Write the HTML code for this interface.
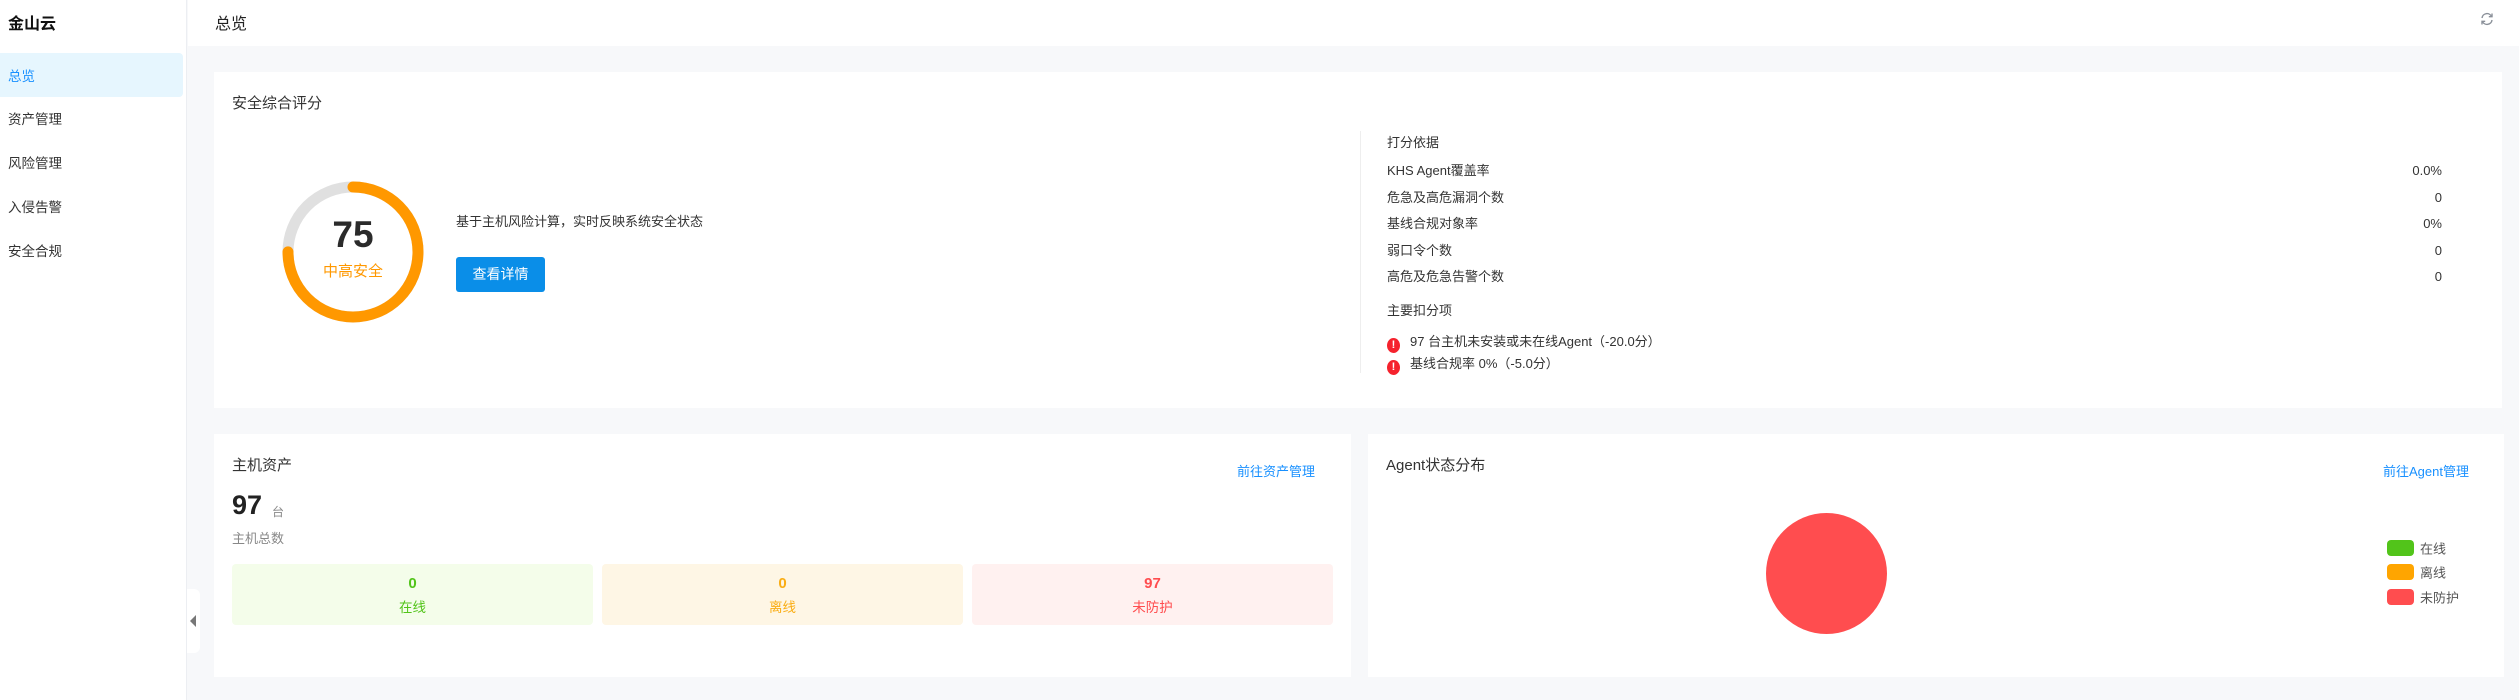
<!DOCTYPE html>
<html><head><meta charset="utf-8"><style>
*{margin:0;padding:0;box-sizing:border-box}
body{width:2519px;height:700px;overflow:hidden;background:#f7f8fa;font-family:"Liberation Sans","Noto Sans CJK SC",sans-serif;color:#333;position:relative}
.a{position:absolute;white-space:nowrap}
.side{position:absolute;left:0;top:0;width:187px;height:700px;background:#fff;border-right:1px solid #eceef2}
.hdr{position:absolute;left:188px;top:0;right:0;height:46px;background:#fff}
.card{position:absolute;background:#fff}
.menu{position:absolute;left:8px;font-size:13.5px;color:#333;transform:translateY(-50%)}
.row{position:absolute;left:1387px;width:1055px;height:20px;font-size:13px;transform:translateY(-50%);display:flex;justify-content:space-between;align-items:center;line-height:20px}
.box{position:absolute;top:564px;height:61px;width:361px;border-radius:4px;text-align:center}
.box b{display:block;font-size:15px;margin-top:11px}
.box span{display:block;font-size:13.5px;margin-top:4px}
.lg{position:absolute;left:2387px;width:27px;height:16px;border-radius:4px}
.lt{position:absolute;left:2420px;font-size:13px;color:#555;transform:translateY(-50%)}
.ic{display:inline-block;vertical-align:-2px;width:13px;height:15px;border-radius:50%;background:#f5222d;color:#fff;font-size:11px;font-weight:bold;text-align:center;line-height:15px;margin-right:10px}
</style></head><body>
<div class="side">
<div class="a" style="left:8px;top:10px;font-size:16px;font-weight:bold;color:#111">金山云</div>
<div class="a" style="left:0;top:53px;width:183px;height:44px;background:#e6f6fe;border-radius:0 4px 4px 0"></div>
<div class="menu" style="top:75px;color:#1890ff">总览</div>
<div class="menu" style="top:118px">资产管理</div>
<div class="menu" style="top:162px">风险管理</div>
<div class="menu" style="top:206px">入侵告警</div>
<div class="menu" style="top:250px">安全合规</div>
</div>
<div class="hdr"></div>
<div class="a" style="left:215px;top:10px;font-size:16px;color:#222">总览</div>
<svg class="a" style="left:2480px;top:12px" width="14" height="14" viewBox="0 0 14 14" fill="none" stroke="#8a9099" stroke-width="1.4"><path d="M2 6A5 5 0 0 1 11.5 4.5"/><path d="M12 1.5v3.2H8.8"/><path d="M12 8A5 5 0 0 1 2.5 9.5"/><path d="M2 12.5V9.3h3.2"/></svg>

<div class="card" style="left:214px;top:72px;width:2288px;height:336px"></div>
<div class="a" style="left:232px;top:92px;font-size:15px">安全综合评分</div>
<svg class="a" style="left:282px;top:181px" width="142" height="142" viewBox="0 0 142 142">
<circle cx="71" cy="71" r="65" fill="none" stroke="#e0e0e0" stroke-width="11"/>
<circle cx="71" cy="71" r="65" fill="none" stroke="#ff9800" stroke-width="11" stroke-dasharray="306.3 408.4" stroke-linecap="round" transform="rotate(-90 71 71)"/>
</svg>
<div class="a" style="left:303px;top:214px;width:100px;text-align:center;font-size:37px;font-weight:bold;color:#2b2b2b">75</div>
<div class="a" style="left:303px;top:260px;width:100px;text-align:center;font-size:15px;color:#ff9800">中高安全</div>
<div class="a" style="left:456px;top:211px;font-size:13px">基于主机风险计算，实时反映系统安全状态</div>
<div class="a" style="left:456px;top:257px;width:89px;height:35px;background:#0a8ee8;border-radius:3px;color:#fff;font-size:14px;text-align:center;line-height:35px">查看详情</div>
<div class="a" style="left:1360px;top:131px;width:1px;height:242px;background:#eee"></div>
<div class="a" style="left:1387px;top:132px;font-size:13px">打分依据</div>
<div class="row" style="top:171px"><span>KHS Agent覆盖率</span><span>0.0%</span></div>
<div class="row" style="top:198px"><span>危急及高危漏洞个数</span><span>0</span></div>
<div class="row" style="top:224px"><span>基线合规对象率</span><span>0%</span></div>
<div class="row" style="top:251px"><span>弱口令个数</span><span>0</span></div>
<div class="row" style="top:277px"><span>高危及危急告警个数</span><span>0</span></div>
<div class="a" style="left:1387px;top:300px;font-size:13px">主要扣分项</div>
<div class="a" style="left:1387px;top:331px;font-size:13px"><span class="ic">!</span>97 台主机未安装或未在线Agent（-20.0分）</div>
<div class="a" style="left:1387px;top:353px;font-size:13px"><span class="ic">!</span>基线合规率 0%（-5.0分）</div>

<div class="card" style="left:214px;top:434px;width:1137px;height:243px"></div>
<div class="a" style="left:232px;top:454px;font-size:15px">主机资产</div>
<div class="a" style="left:1215px;top:461px;width:100px;text-align:right;font-size:13px;color:#1890ff">前往资产管理</div>
<div class="a" style="left:232px;top:490px;font-size:27px;font-weight:bold;color:#222">97</div>
<div class="a" style="left:272px;top:503px;font-size:12px;color:#888">台</div>
<div class="a" style="left:232px;top:528px;font-size:13px;color:#888">主机总数</div>
<div class="box" style="left:232px;background:#f4fdea;color:#52c41a"><b>0</b><span>在线</span></div>
<div class="box" style="left:602px;background:#fef6e5;color:#faad14"><b>0</b><span>离线</span></div>
<div class="box" style="left:972px;background:#fff1f0;color:#ff4d4f"><b>97</b><span>未防护</span></div>
<div class="a" style="left:187px;top:589px;width:13px;height:64px;background:#fff;border-radius:0 6px 6px 0"></div>
<div class="a" style="left:190px;top:615px;width:0;height:0;border-top:6px solid transparent;border-bottom:6px solid transparent;border-right:6px solid #777"></div>

<div class="card" style="left:1368px;top:434px;width:1136px;height:243px"></div>
<div class="a" style="left:1386px;top:454px;font-size:15px">Agent状态分布</div>
<div class="a" style="left:2369px;top:461px;width:100px;text-align:right;font-size:13px;color:#1890ff">前往Agent管理</div>
<div class="a" style="left:1766px;top:513px;width:121px;height:121px;border-radius:50%;background:#ff4d4f"></div>
<div class="lg" style="top:540px;background:#52c41a"></div><div class="lt" style="top:548px">在线</div>
<div class="lg" style="top:564px;background:#ffa500"></div><div class="lt" style="top:572px">离线</div>
<div class="lg" style="top:589px;background:#ff4d4f"></div><div class="lt" style="top:597px">未防护</div>
</body></html>
